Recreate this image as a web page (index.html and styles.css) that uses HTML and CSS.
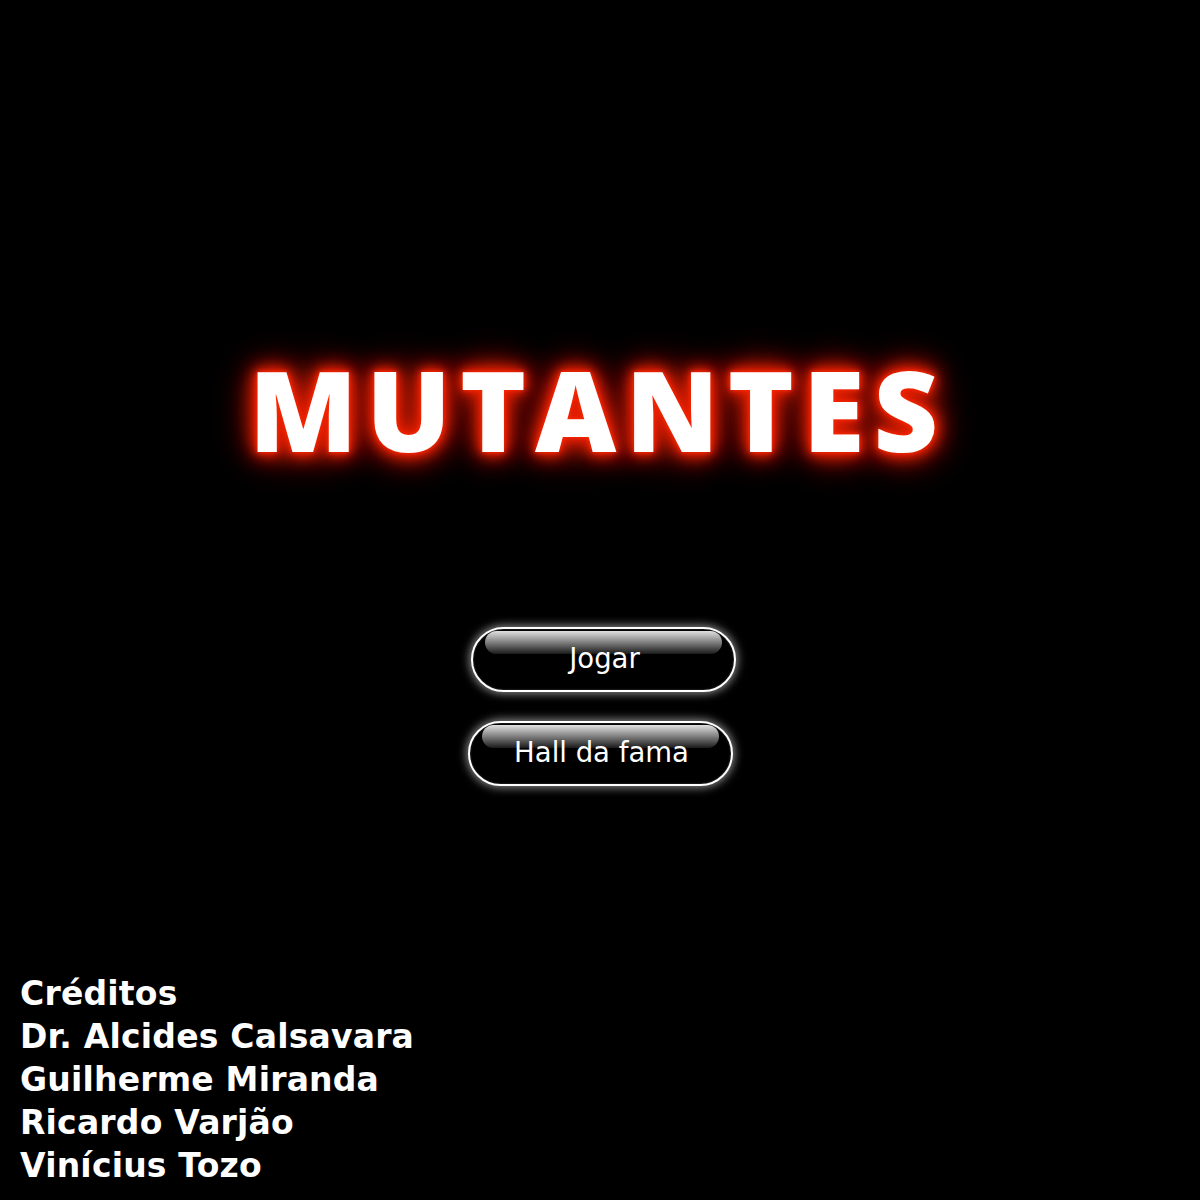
FILE: index.html
```html
<!DOCTYPE html>
<html lang="pt">
<head>
<meta charset="utf-8">
<title>Mutantes</title>
<link rel="stylesheet" href="styles.css">
</head>
<body>
<div class="screen">
  <h1 class="title">MUTANTES</h1>
  <div class="menu">
    <button class="pill pill-play"><span class="pill-label">Jogar</span></button>
    <button class="pill pill-fame"><span class="pill-label">Hall da fama</span></button>
  </div>
  <div class="credits">
    <div>Créditos</div>
    <div>Dr. Alcides Calsavara</div>
    <div>Guilherme Miranda</div>
    <div>Ricardo Varjão</div>
    <div>Vinícius Tozo</div>
  </div>
</div>
</body>
</html>
```
FILE: styles.css
```css
html, body {
  margin: 0;
  padding: 0;
  background: #000;
}
.screen {
  width: 1200px;
  height: 1200px;
  display: flex;
  flex-direction: column;
  background: #000;
  color: #fff;
  font-family: "DejaVu Sans", sans-serif;
}
.title {
  margin: 339px 0 0 0;
  text-align: center;
  font-family: "Open Sans", "DejaVu Sans", sans-serif;
  font-weight: 800;
  font-size: 112px;
  line-height: 140px;
  letter-spacing: 9px;
  padding-right: 4px;
  color: #fff;
  text-shadow: 0 0 4px #ff2a00, 0 0 9px #f02200, 0 0 14px #e02000, 0 0 20px #e02000, 0 0 27px #c81a00, 0 0 36px #a01400, 0 0 48px #600c00;
}
.menu {
  margin-top: 148px;
  display: flex;
  flex-direction: column;
  align-items: center;
  gap: 29px;
}
.pill {
  position: relative;
  width: 265px;
  height: 65px;
  border: 2px solid #fff;
  border-radius: 33px;
  background: #000;
  color: #fff;
  font-family: "DejaVu Sans", sans-serif;
  font-size: 27.5px;
  padding: 0;
  box-shadow: 0 0 9px 2px rgba(255,255,255,0.5), inset 0 0 2px rgba(255,255,255,0.3);
  overflow: hidden;
}
.pill::before {
  content: "";
  position: absolute;
  left: 12px;
  right: 12px;
  top: 2px;
  height: 23px;
  border-radius: 12px;
  background: linear-gradient(#e0e0e0 0%, #b0b0b0 25%, #606060 65%, #1a1a1a 100%);
}
.pill-label {
  position: relative;
  z-index: 1;
  display: block;
  margin-top: -4px;
  padding-left: 3px;
}
.pill-play { margin-left: 6px; }
.credits {
  margin-top: auto;
  margin-bottom: 13px;
  padding-left: 20px;
  font-weight: bold;
  font-size: 33px;
  letter-spacing: 0.2px;
  line-height: 43px;
}
```
